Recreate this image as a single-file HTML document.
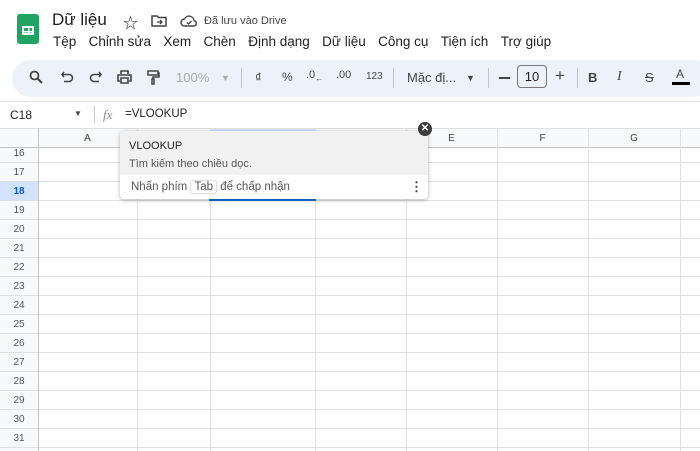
<!DOCTYPE html>
<html><head><meta charset="utf-8"><style>
*{margin:0;padding:0;box-sizing:border-box}
body{width:700px;height:451px;overflow:hidden;background:#fff;font-family:"Liberation Sans","Noto Sans CJK SC",sans-serif;color:#1f1f1f;position:relative}
.a{position:absolute;white-space:nowrap}
.menu span{margin-right:12.4px}
.tb{position:absolute;left:12px;top:60px;width:700px;height:37px;background:#edf2fa;border-radius:19px}
.ic{position:absolute;font-size:14px;color:#444;top:69px}
.sep{position:absolute;top:68px;width:1px;height:20px;background:#c7c7c7}
.grid{position:absolute;left:0;top:128px;width:700px;height:323px}
.hl{position:absolute;left:0;width:700px;height:1px;background:#e1e1e1}
.vl{position:absolute;top:0;width:1px;height:323px;background:#e1e1e1}
.rn{position:absolute;left:0;width:38px;text-align:center;font-size:10px;color:#555}
.cn{position:absolute;top:5px;font-size:10px;color:#444;text-align:center}
svg.s{position:absolute;top:70px}
</style></head><body>
<div class="a" style="left:17px;top:14px;width:22px;height:30px;background:#1fa463;border-radius:3px"></div>
<div class="a" style="left:22px;top:26px;width:12px;height:9px;border:2px solid #fff;background:linear-gradient(#fff,#fff) 4px 0/1.5px 100% no-repeat,linear-gradient(#fff,#fff) 0 2.5px/100% 1.5px no-repeat"></div>
<div class="a" style="left:52px;top:10px;font-size:17px">Dữ liệu</div>
<div class="a" style="left:123px;top:12px;font-size:15px">☆</div>
<svg class="a" style="left:151px;top:14px" width="16" height="13" viewBox="0 0 16 13"><path d="M1 2h5l1.5 1.5H15V12H1z" fill="none" stroke="#444" stroke-width="1.5"/><path d="M6 8h5M9 6l2 2-2 2" fill="none" stroke="#444" stroke-width="1.3"/></svg>
<svg class="a" style="left:180px;top:14px" width="18" height="13" viewBox="0 0 18 13"><path d="M4.5 12a3.5 3.5 0 0 1 0-7 5 5 0 0 1 9.5 1.5 2.8 2.8 0 0 1 0 5.5z" fill="none" stroke="#444" stroke-width="1.4"/><path d="M7 8.5l1.5 1.5 3-3" fill="none" stroke="#444" stroke-width="1.3"/></svg>
<div class="a" style="left:204px;top:15px;font-size:11px;color:#444">Đã lưu vào Drive</div>
<div class="a menu" style="left:53px;top:34px;font-size:13.5px"><span>Tệp</span><span>Chỉnh sửa</span><span>Xem</span><span>Chèn</span><span>Định dạng</span><span>Dữ liệu</span><span>Công cụ</span><span>Tiện ích</span><span>Trợ giúp</span></div>
<div class="tb"></div>
<svg class="s" style="left:29px" width="14" height="14" viewBox="0 0 14 14"><circle cx="5.5" cy="5.5" r="4" fill="none" stroke="#444" stroke-width="1.8"/><path d="M8.5 8.5l4.5 4.5" stroke="#444" stroke-width="2"/></svg>
<svg class="s" style="left:61px;top:71px" width="13" height="12" viewBox="0 0 13 12"><path d="M3 1L1 3.5 3 6M1 3.5h7a3.5 3.5 0 0 1 0 7H3" fill="none" stroke="#444" stroke-width="1.6"/></svg>
<svg class="s" style="left:89px;top:71px" width="13" height="12" viewBox="0 0 13 12"><path d="M10 1l2 2.5L10 6M12 3.5H5a3.5 3.5 0 0 0 0 7h5" fill="none" stroke="#444" stroke-width="1.6"/></svg>
<svg class="s" style="left:117px" width="15" height="14" viewBox="0 0 15 14"><path d="M4 4V1h7v3M3 11H1V5h13v6h-2M4 8h7v5H4z" fill="none" stroke="#444" stroke-width="1.6"/></svg>
<svg class="s" style="left:146px" width="14" height="15" viewBox="0 0 14 15"><path d="M2 1h10v4H2zM12 3h1v4H7v2M6 9h2v5H6z" fill="none" stroke="#444" stroke-width="1.5"/></svg>
<div class="ic" style="left:176px;color:#aaa;font-size:13px;top:70px">100%</div>
<div class="ic" style="left:221px;color:#aaa;font-size:9px;top:73px">▼</div>
<div class="sep" style="left:241px"></div>
<div class="ic" style="left:255px;font-size:13px;top:70px">₫</div>
<div class="ic" style="left:282px;font-size:12px;top:70px">%</div>
<div class="ic" style="left:306px;font-size:11px;top:69px">.0<sub style="font-size:8px">←</sub></div>
<div class="ic" style="left:336px;font-size:11px;top:69px">.00</div>
<div class="ic" style="left:366px;font-size:10px;top:71px">123</div>
<div class="sep" style="left:393px"></div>
<div class="ic" style="left:407px;font-size:13px;top:70px">Mặc đị...</div>
<div class="ic" style="left:466px;font-size:9px;top:73px">▼</div>
<div class="sep" style="left:488px"></div>
<div class="a" style="left:499px;top:77px;width:11px;height:2px;background:#444"></div>
<div class="a" style="left:517px;top:65px;width:30px;height:23px;border:1px solid #777;border-radius:4px;font-size:13px;text-align:center;line-height:21px">10</div>
<div class="ic" style="left:555px;font-size:17px;top:66px">+</div>
<div class="sep" style="left:577px"></div>
<div class="ic" style="left:588px;font-weight:bold;font-size:13px;top:70px">B</div>
<div class="ic" style="left:617px;font-style:italic;font-size:14px;top:69px;font-family:'Liberation Serif',serif">I</div>
<div class="ic" style="left:645px;font-size:13px;top:70px;text-decoration:line-through">S</div>
<div class="ic" style="left:676px;font-size:12px;top:67px">A</div>
<div class="a" style="left:672px;top:82px;width:18px;height:3px;background:#000"></div>
<div class="a" style="left:0;top:101px;width:700px;height:27px;border-top:1px solid #e1e1e1"></div>
<div class="a" style="left:10px;top:108px;font-size:12px">C18</div>
<div class="a" style="left:74px;top:109px;font-size:8px;color:#444">▼</div>
<div class="a" style="left:94px;top:106px;width:1px;height:17px;background:#ccc"></div>
<div class="a" style="left:103px;top:107px;font-size:13px;color:#888;font-style:italic;font-family:'Liberation Serif',serif">fx</div>
<div class="a" style="left:125px;top:108px;font-size:11.5px">=VLOOKUP</div>
<div class="grid">
<div class="a" style="left:0;top:0;width:700px;height:19px;background:#f8f9fa"></div>
<div class="a" style="left:0;top:19px;width:38px;height:304px;background:#f8f9fa"></div>
<div class="a" style="left:0;top:53px;width:38px;height:19px;background:#d3e3fd"></div>
<div class="a" style="left:210px;top:0;width:105px;height:19px;background:#d3e3fd"></div>
<div class="hl" style="top:0"></div><div class="hl" style="top:19px;background:#c4c4c4"></div>
<div class="hl" style="top:34px"></div><div class="hl" style="top:53px"></div><div class="hl" style="top:72px"></div><div class="hl" style="top:91px"></div><div class="hl" style="top:110px"></div><div class="hl" style="top:129px"></div><div class="hl" style="top:148px"></div><div class="hl" style="top:167px"></div><div class="hl" style="top:186px"></div><div class="hl" style="top:205px"></div><div class="hl" style="top:224px"></div><div class="hl" style="top:243px"></div><div class="hl" style="top:262px"></div><div class="hl" style="top:281px"></div><div class="hl" style="top:300px"></div><div class="hl" style="top:319px"></div>
<div class="vl" style="left:38px;background:#c4c4c4"></div><div class="vl" style="left:137px"></div><div class="vl" style="left:210px"></div><div class="vl" style="left:315px"></div><div class="vl" style="left:406px"></div><div class="vl" style="left:497px"></div><div class="vl" style="left:588px"></div><div class="vl" style="left:680px"></div>
<div class="cn" style="left:38px;width:99px">A</div>
<div class="cn" style="left:406px;width:91px">E</div>
<div class="cn" style="left:497px;width:91px">F</div>
<div class="cn" style="left:588px;width:92px">G</div>
<div class="rn" style="top:20px">16</div><div class="rn" style="top:39px">17</div><div class="rn" style="top:58px;font-weight:bold;color:#0b57d0">18</div><div class="rn" style="top:77px">19</div><div class="rn" style="top:96px">20</div><div class="rn" style="top:115px">21</div><div class="rn" style="top:134px">22</div><div class="rn" style="top:153px">23</div><div class="rn" style="top:172px">24</div><div class="rn" style="top:191px">25</div><div class="rn" style="top:210px">26</div><div class="rn" style="top:229px">27</div><div class="rn" style="top:248px">28</div><div class="rn" style="top:267px">29</div><div class="rn" style="top:286px">30</div><div class="rn" style="top:305px">31</div>
<div class="a" style="left:209px;top:52px;width:107px;height:21px;border:2px solid #1a73e8"></div>
</div>
<div class="a" style="left:120px;top:131px;width:308px;height:68px;background:#fff;border-radius:4px;box-shadow:0 1px 4px rgba(0,0,0,.3)">
<div style="height:44px;background:#f1f1f1;border-radius:4px 4px 0 0;padding:6px 0 0 9px;font-size:11px;line-height:18px">VLOOKUP<br><span style="color:#555">Tìm kiếm theo chiều dọc.</span></div>
<div style="padding:6px 0 0 11px;font-size:11.5px;color:#555">Nhấn phím <span style="border:1px solid #ddd;border-radius:3px;padding:0 3px">Tab</span> để chấp nhận</div>
<div class="a" style="left:290px;top:48px;font-size:13px;font-weight:bold;color:#444">⋮</div>
</div>
<div class="a" style="left:418px;top:122px;width:14px;height:14px;border-radius:50%;background:#3c3c3c;color:#fff;font-size:10px;text-align:center;line-height:14px;font-weight:bold">✕</div>
</body></html>
